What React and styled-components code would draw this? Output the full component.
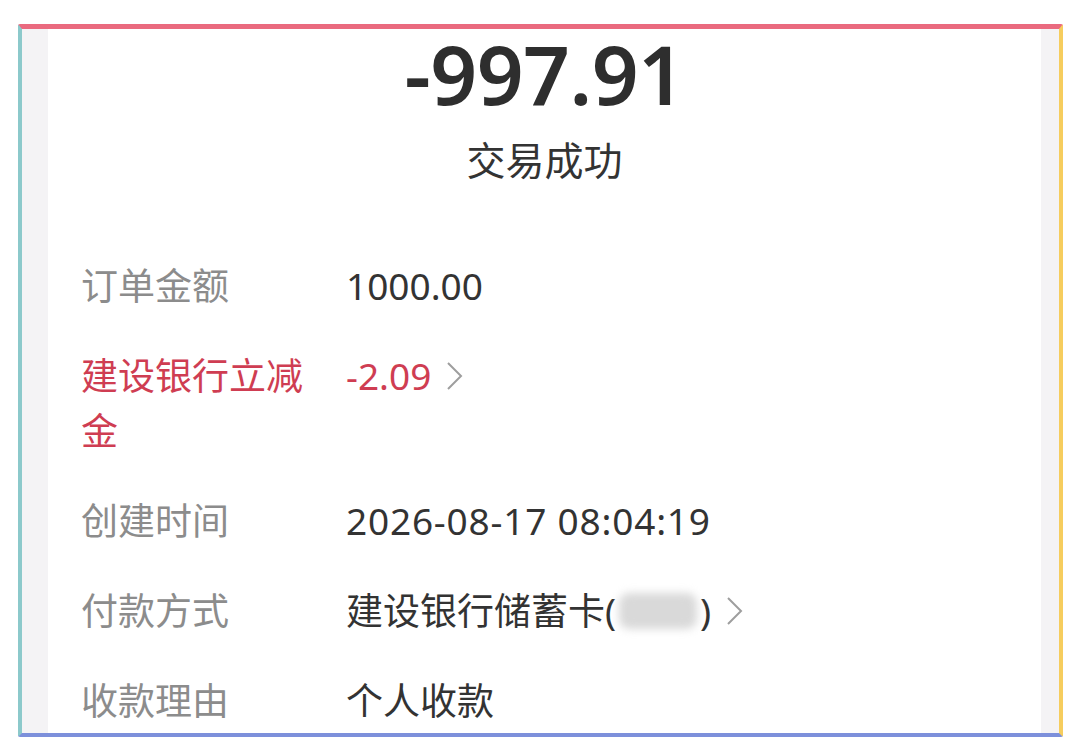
import React from "react";
import styled, { createGlobalStyle } from "styled-components";

const Global = createGlobalStyle`
  html, body {
    margin: 0;
    padding: 0;
    background: #ffffff;
    font-family: "Noto Sans", "Noto Sans CJK SC", sans-serif;
  }
`;

const Page = styled.div`
  width: 1080px;
  height: 756px;
  padding: 24px 17px 19px 18px;
  box-sizing: border-box;
`;

const Frame = styled.div`
  height: 100%;
  box-sizing: border-box;
  border-top: 5px solid #ea6a7f;
  border-left: 4px solid #8cc9cb;
  border-right: 4px solid #f6cd5e;
  border-bottom: 4px solid #7d90db;
  border-radius: 2px;
  background: #f4f3f5;
  display: flex;
  overflow: hidden;
`;

const Sheet = styled.div`
  flex: 1;
  margin: 0 18px 0 26px;
  background: #ffffff;
  overflow: hidden;
`;

const Header = styled.div`
  display: flex;
  flex-direction: column;
  align-items: center;
`;

const Amount = styled.div`
  font-size: 82px;
  font-weight: 600;
  line-height: 88px;
  color: #2e2e2e;
  letter-spacing: -0.5px;
`;

const Status = styled.div`
  font-size: 39px;
  line-height: 50px;
  margin-top: 18px;
  color: #333333;
`;

const List = styled.div`
  padding: 73px 0 0 33px;
  display: flex;
  flex-direction: column;
  gap: 35px;
`;

const Row = styled.div`
  display: flex;
  align-items: flex-start;
  font-size: 37px;
  line-height: 55px;
`;

const Label = styled.div`
  width: 228px;
  flex: none;
  margin-right: 37px;
  color: ${(p) => (p.$red ? "#cf3d52" : "#8c8c8c")};
`;

const Value = styled.div`
  display: flex;
  align-items: center;
  color: ${(p) => (p.$red ? "#cf3d52" : "#333333")};
  letter-spacing: ${(p) => (p.$wide ? "0.8px" : "0")};
  white-space: nowrap;
`;

const Chevron = styled.svg`
  width: 17px;
  height: 30px;
  margin-left: 15px;
  flex: none;
`;

const Blur = styled.span`
  display: inline-block;
  width: 78px;
  height: 36px;
  margin: 0 3px;
  border-radius: 10px;
  background: #d9d9d9;
  filter: blur(4px);
`;

const Arrow = () => (
  <Chevron viewBox="0 0 17 30">
    <path d="M2 2 L15 15 L2 28" fill="none" stroke="#9e9e9e" strokeWidth="2" />
  </Chevron>
);

export default function App() {
  return (
    <>
      <Global />
      <Page>
        <Frame>
          <Sheet>
            <Header>
              <Amount>-997.91</Amount>
              <Status>交易成功</Status>
            </Header>
            <List>
              <Row>
                <Label>订单金额</Label>
                <Value>1000.00</Value>
              </Row>
              <Row>
                <Label $red>建设银行立减金</Label>
                <Value $red>
                  -2.09
                  <Arrow />
                </Value>
              </Row>
              <Row>
                <Label>创建时间</Label>
                <Value $wide>2026-08-17 08:04:19</Value>
              </Row>
              <Row>
                <Label>付款方式</Label>
                <Value>
                  建设银行储蓄卡(
                  <Blur />)
                  <Arrow />
                </Value>
              </Row>
              <Row>
                <Label>收款理由</Label>
                <Value>个人收款</Value>
              </Row>
            </List>
          </Sheet>
        </Frame>
      </Page>
    </>
  );
}
